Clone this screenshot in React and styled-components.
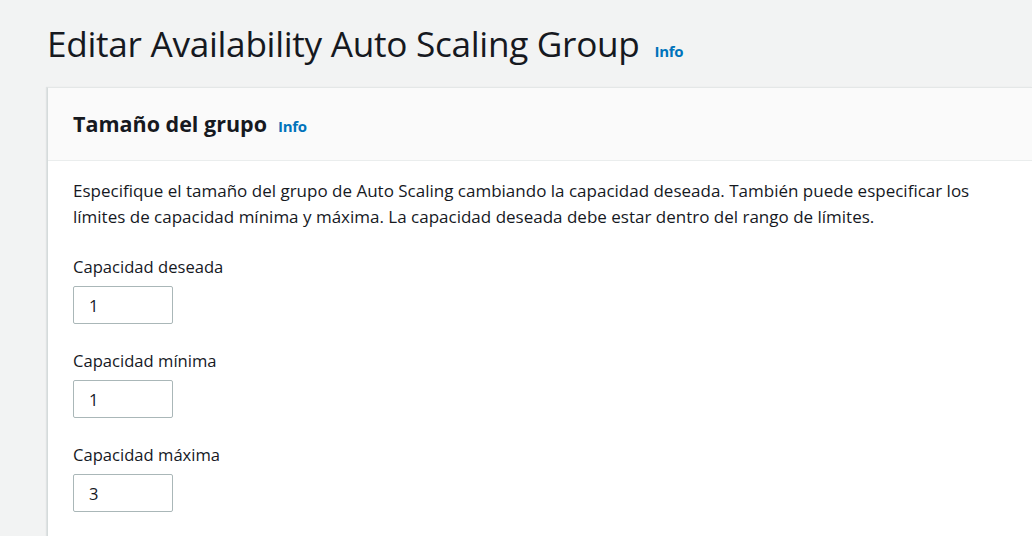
import React from 'react';
import styled, { createGlobalStyle } from 'styled-components';

const GlobalStyle = createGlobalStyle`
  html, body {
    margin: 0;
    padding: 0;
    background: #f2f3f3;
    font-family: "Open Sans", "Noto Sans", sans-serif;
    color: #16191f;
    overflow: hidden;
  }
`;

const fields = [
  { label: 'Capacidad deseada', value: '1' },
  { label: 'Capacidad mínima', value: '1' },
  { label: 'Capacidad máxima', value: '3' },
];

const App = () => {
  return (
    <>
      <GlobalStyle />
      <Page>
        <PageHeader>
          <Title>Editar Availability Auto Scaling Group</Title>
          <InfoLink>Info</InfoLink>
        </PageHeader>
        <Card>
          <CardHeader>
            <CardTitle>Tamaño del grupo</CardTitle>
            <InfoLink>Info</InfoLink>
          </CardHeader>
          <CardBody>
            <Description>
              Especifique el tamaño del grupo de Auto Scaling cambiando la capacidad deseada. También puede especificar los
              límites de capacidad mínima y máxima. La capacidad deseada debe estar dentro del rango de límites.
            </Description>
            {fields.map((f) => (
              <Field key={f.label}>
                <Label>{f.label}</Label>
                <Input readOnly value={f.value} />
              </Field>
            ))}
          </CardBody>
        </Card>
      </Page>
    </>
  );
};

export default App;

const Page = styled.div`
  display: flex;
  flex-direction: column;
  padding: 20px 0 0 47px;
  height: 100vh;
  box-sizing: border-box;
  overflow: hidden;
`;

const PageHeader = styled.div`
  display: flex;
  align-items: baseline;
  gap: 15px;
  height: 67px;
  flex-shrink: 0;
`;

const Title = styled.h1`
  margin: 0;
  font-size: 35.2px;
  font-weight: 400;
  line-height: 46px;
  letter-spacing: -0.3px;
  color: #16191f;
`;

const InfoLink = styled.a`
  font-size: 15px;
  font-weight: 700;
  color: #0073bb;
  cursor: pointer;
  letter-spacing: -0.3px;
`;

const Card = styled.div`
  flex: 1;
  background: #ffffff;
  border-left: 1px solid #d5dbdb;
  border-top: 1px solid #e4e7e7;
  box-shadow: -1px 0 1px rgba(0, 28, 36, 0.08);
`;

const CardHeader = styled.div`
  display: flex;
  align-items: baseline;
  gap: 11px;
  height: 73px;
  box-sizing: border-box;
  padding: 21px 25px 0;
  background: #fafafa;
  border-bottom: 1px solid #eaeded;
`;

const CardTitle = styled.h2`
  margin: 0;
  font-size: 21.5px;
  font-weight: 700;
  line-height: 30px;
`;

const CardBody = styled.div`
  padding: 17px 25px 0;
`;

const Description = styled.p`
  margin: 0 0 26px;
  font-size: 17px;
  line-height: 26px;
  width: 940px;
`;

const Field = styled.div`
  display: flex;
  flex-direction: column;
  align-items: flex-start;
  gap: 8px;
  margin-bottom: 26px;
`;

const Label = styled.label`
  font-size: 16.6px;
  line-height: 22px;
`;

const Input = styled.input`
  width: 100px;
  height: 38px;
  box-sizing: border-box;
  padding: 0 15px;
  border: 1px solid #aab7b8;
  border-radius: 2px;
  font-family: inherit;
  font-size: 16.5px;
  color: #16191f;
  background: #fff;
  outline: none;
`;
